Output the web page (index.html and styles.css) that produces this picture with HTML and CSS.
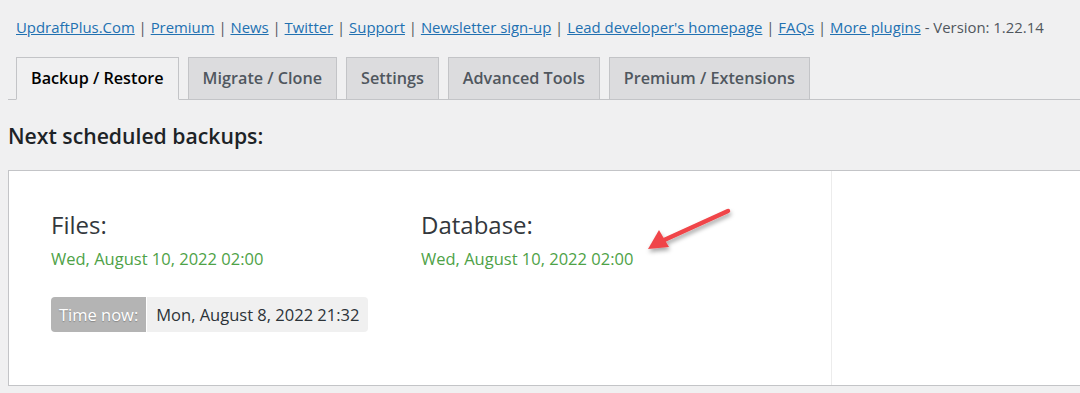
FILE: index.html
```html
<!DOCTYPE html>
<html lang="en">
<head>
  <meta charset="UTF-8">
  <title>UpdraftPlus Backup / Restore</title>
  <link rel="stylesheet" href="styles.css">
</head>
<body>
  <div class="wrap">
    <p class="links">
      <a href="#">UpdraftPlus.Com</a> | <a href="#">Premium</a> | <a href="#">News</a> | <a href="#">Twitter</a> | <a href="#">Support</a> | <a href="#">Newsletter sign-up</a> | <a href="#">Lead developer's homepage</a> | <a href="#">FAQs</a> | <a href="#">More plugins</a> - Version: 1.22.14
    </p>

    <nav class="tabs">
      <a href="#" class="tab active">Backup / Restore</a>
      <a href="#" class="tab">Migrate / Clone</a>
      <a href="#" class="tab">Settings</a>
      <a href="#" class="tab">Advanced Tools</a>
      <a href="#" class="tab">Premium / Extensions</a>
    </nav>

    <h2 class="section-title">Next scheduled backups:</h2>

    <div class="schedule-box">
      <div class="schedule-main">
        <div class="schedule-row">
          <div class="schedule-col">
            <h3>Files:</h3>
            <div class="next-date">Wed, August 10, 2022 02:00</div>
          </div>
          <div class="schedule-col">
            <h3>Database:</h3>
            <div class="next-date">Wed, August 10, 2022 02:00</div>
          </div>
        </div>
        <div class="time-now">
          <span class="time-label">Time now:</span>
          <span class="time-value">Mon, August 8, 2022 21:32</span>
        </div>
        <svg class="arrow" width="100" height="56" viewBox="0 0 100 56">
          <defs>
            <filter id="shadow" x="-20%" y="-20%" width="140%" height="160%">
              <feDropShadow dx="1" dy="3" stdDeviation="2" flood-color="#000" flood-opacity="0.35"/>
            </filter>
          </defs>
          <g filter="url(#shadow)">
            <line x1="84" y1="8" x2="18" y2="38" stroke="#f04548" stroke-width="4.5" stroke-linecap="round"/>
            <polygon points="4,46 15,27 25,44" fill="#f04548"/>
          </g>
        </svg>
      </div>
      <div class="schedule-side"></div>
    </div>
  </div>
</body>
</html>
```

FILE: styles.css
```css
* {
  box-sizing: border-box;
}

body {
  margin: 0;
  background-color: #f0f0f1;
  font-family: "Open Sans", "Noto Sans", sans-serif;
  color: #3c434a;
  overflow: hidden;
}

.wrap {
  padding-left: 8px;
}

.links {
  margin: 0;
  padding: 16px 0 0 8px;
  font-size: 14.9px;
  line-height: 22px;
  color: #50575e;
  white-space: nowrap;
}

.links a {
  color: #2271b1;
}

.tabs {
  display: flex;
  gap: 9px;
  margin-top: 19px;
  padding-left: 8px;
  border-bottom: 1px solid #c3c4c7;
}

.tab {
  display: block;
  height: 43px;
  line-height: 41px;
  padding: 0 14px;
  margin-bottom: -1px;
  border: 1px solid #c3c4c7;
  background: #dcdcde;
  color: #50575e;
  font-size: 16.2px;
  font-weight: 600;
  text-decoration: none;
}

.tab.active {
  background: #f0f0f1;
  color: #000;
  border-bottom-color: #f0f0f1;
}

.section-title {
  margin: 23px 0 0;
  font-size: 21.2px;
  line-height: 26px;
  font-weight: 600;
  color: #1d2327;
}

.schedule-box {
  display: flex;
  margin-top: 21px;
  height: 216px;
  background: #fff;
  border: 1px solid #c3c4c7;
  border-right: none;
}

.schedule-main {
  position: relative;
  width: 823px;
  padding: 38px 0 0 42px;
  border-right: 1px solid #ececec;
}

.schedule-side {
  flex: 1;
}

.schedule-row {
  display: flex;
}

.schedule-col {
  width: 370px;
}

.schedule-col h3 {
  margin: 0;
  font-size: 24px;
  line-height: 32px;
  font-weight: 500;
  color: #32373c;
}

.next-date {
  margin-top: 7px;
  font-size: 16.5px;
  line-height: 22px;
  color: #4ea247;
}

.time-now {
  display: inline-flex;
  margin-top: 27px;
  height: 35px;
  font-size: 16.5px;
  line-height: 35px;
  border-radius: 4px;
  overflow: hidden;
}

.time-label {
  padding: 0 8px;
  background: #b4b4b4;
  color: #fff;
  text-shadow: 0 1px 1px rgba(0, 0, 0, 0.25);
}

.time-value {
  padding: 0 9px;
  background: #f0f0f0;
  margin-left: 1px;
  color: #2c3338;
}

.arrow {
  position: absolute;
  left: 635px;
  top: 32px;
}
```
